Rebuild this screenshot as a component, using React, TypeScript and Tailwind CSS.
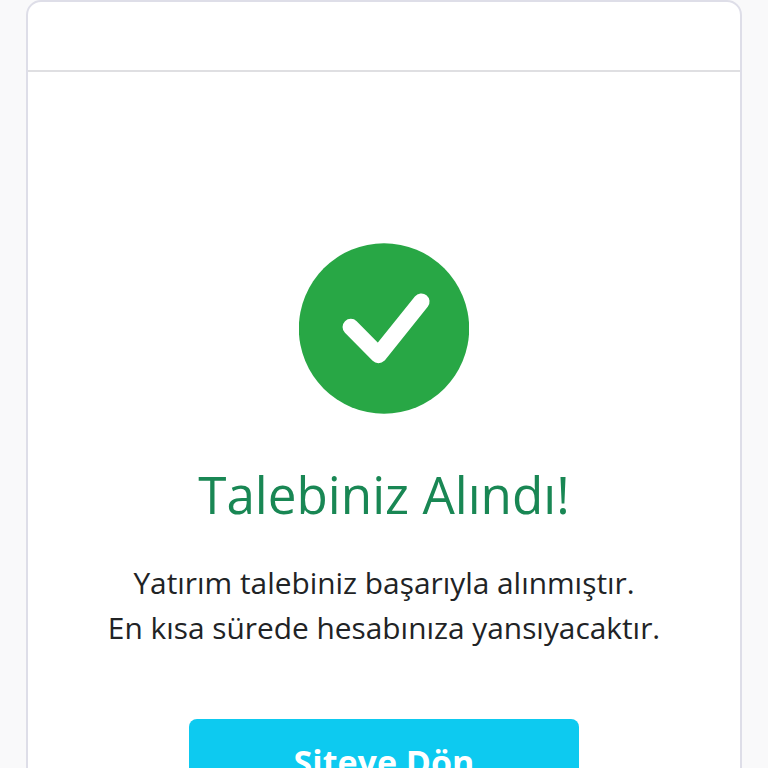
import React from 'react';

const CheckBadge: React.FC = () => (
  <svg width="170" height="171" viewBox="0 0 170 171" fill="none" aria-hidden="true">
    <circle cx="85" cy="85.5" r="85.2" fill="#28a745" />
    <path d="M51.8 84L79.5 112L122.3 58.7" stroke="white" strokeWidth="16.5" strokeLinecap="round" strokeLinejoin="round" />
  </svg>
);

const App: React.FC = () => {
  return (
    <div className="h-screen overflow-hidden bg-[#f9f9fa] px-[26px] font-['Open_Sans',sans-serif]">
      <div className="h-[900px] w-[716px] rounded-[15px] border-2 border-[#dedee8] bg-white">
        {/* Header */}
        <div className="h-[70px] border-b-2 border-[#dfdfe2]" />

        {/* Result */}
        <div className="flex flex-col items-center pt-[171px] text-center">
          <CheckBadge />
          <h1 className="mt-[49px] text-[51.2px] leading-[62px] whitespace-nowrap text-[#198754]">Talebiniz Alındı!</h1>
          <p className="mt-[35px] text-[29.85px] leading-[45px] whitespace-nowrap text-[#212325]">
            Yatırım talebiniz başarıyla alınmıştır.
            <br />
            En kısa sürede hesabınıza yansıyacaktır.
          </p>
          <button className="mt-[69px] h-[86px] w-[390px] rounded-[8px] bg-[#0dcaf0] text-[34px] font-bold text-white">
            Siteye Dön
          </button>
        </div>
      </div>
    </div>
  );
};

export default App;
